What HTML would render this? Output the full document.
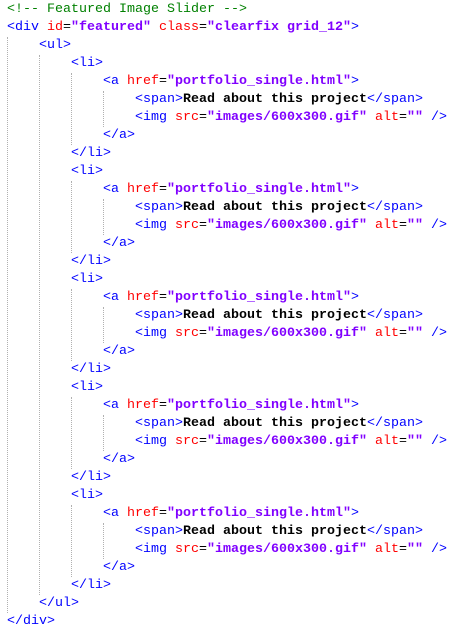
<!DOCTYPE html>
<html><head><meta charset="utf-8"><style>
body{margin:0;background:#fff;width:463px;height:632px;overflow:hidden;position:relative;font-family:"Liberation Mono",monospace;font-size:13.33px}
.l{position:absolute;left:7px;height:18px;line-height:18px;white-space:pre;color:#000}
.t{color:#0000ff}.a{color:#ff0000}.v{color:#8000ff;font-weight:bold}.c{color:#008000}.b{font-weight:bold}
.g{position:absolute;width:0;border-left:1px dotted #b0b0b0}
</style></head><body>
<div class="l" style="top:1px"><span class="c">&lt;!-- Featured Image Slider --&gt;</span></div>
<div class="l" style="top:19px"><span class="t">&lt;div </span><span class="a">id</span>=<span class="v">"featured"</span> <span class="a">class</span>=<span class="v">"clearfix grid_12"</span><span class="t">&gt;</span></div>
<div class="l" style="top:37px">    <span class="t">&lt;ul&gt;</span></div>

<div class="l" style="top:55px">        <span class="t">&lt;li&gt;</span></div>
<div class="l" style="top:73px">            <span class="t">&lt;a </span><span class="a">href</span>=<span class="v">"portfolio_single.html"</span><span class="t">&gt;</span></div>
<div class="l" style="top:91px">                <span class="t">&lt;span&gt;</span><span class="b">Read about this project</span><span class="t">&lt;/span&gt;</span></div>
<div class="l" style="top:109px">                <span class="t">&lt;img </span><span class="a">src</span>=<span class="v">"images/600x300.gif"</span> <span class="a">alt</span>=<span class="v">""</span> <span class="t">/&gt;</span></div>
<div class="l" style="top:127px">            <span class="t">&lt;/a&gt;</span></div>
<div class="l" style="top:145px">        <span class="t">&lt;/li&gt;</span></div>

<div class="l" style="top:163px">        <span class="t">&lt;li&gt;</span></div>
<div class="l" style="top:181px">            <span class="t">&lt;a </span><span class="a">href</span>=<span class="v">"portfolio_single.html"</span><span class="t">&gt;</span></div>
<div class="l" style="top:199px">                <span class="t">&lt;span&gt;</span><span class="b">Read about this project</span><span class="t">&lt;/span&gt;</span></div>
<div class="l" style="top:217px">                <span class="t">&lt;img </span><span class="a">src</span>=<span class="v">"images/600x300.gif"</span> <span class="a">alt</span>=<span class="v">""</span> <span class="t">/&gt;</span></div>
<div class="l" style="top:235px">            <span class="t">&lt;/a&gt;</span></div>
<div class="l" style="top:253px">        <span class="t">&lt;/li&gt;</span></div>

<div class="l" style="top:271px">        <span class="t">&lt;li&gt;</span></div>
<div class="l" style="top:289px">            <span class="t">&lt;a </span><span class="a">href</span>=<span class="v">"portfolio_single.html"</span><span class="t">&gt;</span></div>
<div class="l" style="top:307px">                <span class="t">&lt;span&gt;</span><span class="b">Read about this project</span><span class="t">&lt;/span&gt;</span></div>
<div class="l" style="top:325px">                <span class="t">&lt;img </span><span class="a">src</span>=<span class="v">"images/600x300.gif"</span> <span class="a">alt</span>=<span class="v">""</span> <span class="t">/&gt;</span></div>
<div class="l" style="top:343px">            <span class="t">&lt;/a&gt;</span></div>
<div class="l" style="top:361px">        <span class="t">&lt;/li&gt;</span></div>

<div class="l" style="top:379px">        <span class="t">&lt;li&gt;</span></div>
<div class="l" style="top:397px">            <span class="t">&lt;a </span><span class="a">href</span>=<span class="v">"portfolio_single.html"</span><span class="t">&gt;</span></div>
<div class="l" style="top:415px">                <span class="t">&lt;span&gt;</span><span class="b">Read about this project</span><span class="t">&lt;/span&gt;</span></div>
<div class="l" style="top:433px">                <span class="t">&lt;img </span><span class="a">src</span>=<span class="v">"images/600x300.gif"</span> <span class="a">alt</span>=<span class="v">""</span> <span class="t">/&gt;</span></div>
<div class="l" style="top:451px">            <span class="t">&lt;/a&gt;</span></div>
<div class="l" style="top:469px">        <span class="t">&lt;/li&gt;</span></div>

<div class="l" style="top:487px">        <span class="t">&lt;li&gt;</span></div>
<div class="l" style="top:505px">            <span class="t">&lt;a </span><span class="a">href</span>=<span class="v">"portfolio_single.html"</span><span class="t">&gt;</span></div>
<div class="l" style="top:523px">                <span class="t">&lt;span&gt;</span><span class="b">Read about this project</span><span class="t">&lt;/span&gt;</span></div>
<div class="l" style="top:541px">                <span class="t">&lt;img </span><span class="a">src</span>=<span class="v">"images/600x300.gif"</span> <span class="a">alt</span>=<span class="v">""</span> <span class="t">/&gt;</span></div>
<div class="l" style="top:559px">            <span class="t">&lt;/a&gt;</span></div>
<div class="l" style="top:577px">        <span class="t">&lt;/li&gt;</span></div>

<div class="l" style="top:595px">    <span class="t">&lt;/ul&gt;</span></div>
<div class="l" style="top:613px"><span class="t">&lt;/div&gt;</span></div>

<div class="g" style="left:7px;top:37px;height:576px"></div>
<div class="g" style="left:39px;top:55px;height:540px"></div>

<div class="g" style="left:71px;top:73px;height:72px"></div>
<div class="g" style="left:103px;top:91px;height:36px"></div>
<div class="g" style="left:71px;top:181px;height:72px"></div>
<div class="g" style="left:103px;top:199px;height:36px"></div>
<div class="g" style="left:71px;top:289px;height:72px"></div>
<div class="g" style="left:103px;top:307px;height:36px"></div>
<div class="g" style="left:71px;top:397px;height:72px"></div>
<div class="g" style="left:103px;top:415px;height:36px"></div>
<div class="g" style="left:71px;top:505px;height:72px"></div>
<div class="g" style="left:103px;top:523px;height:36px"></div>
</body></html>
